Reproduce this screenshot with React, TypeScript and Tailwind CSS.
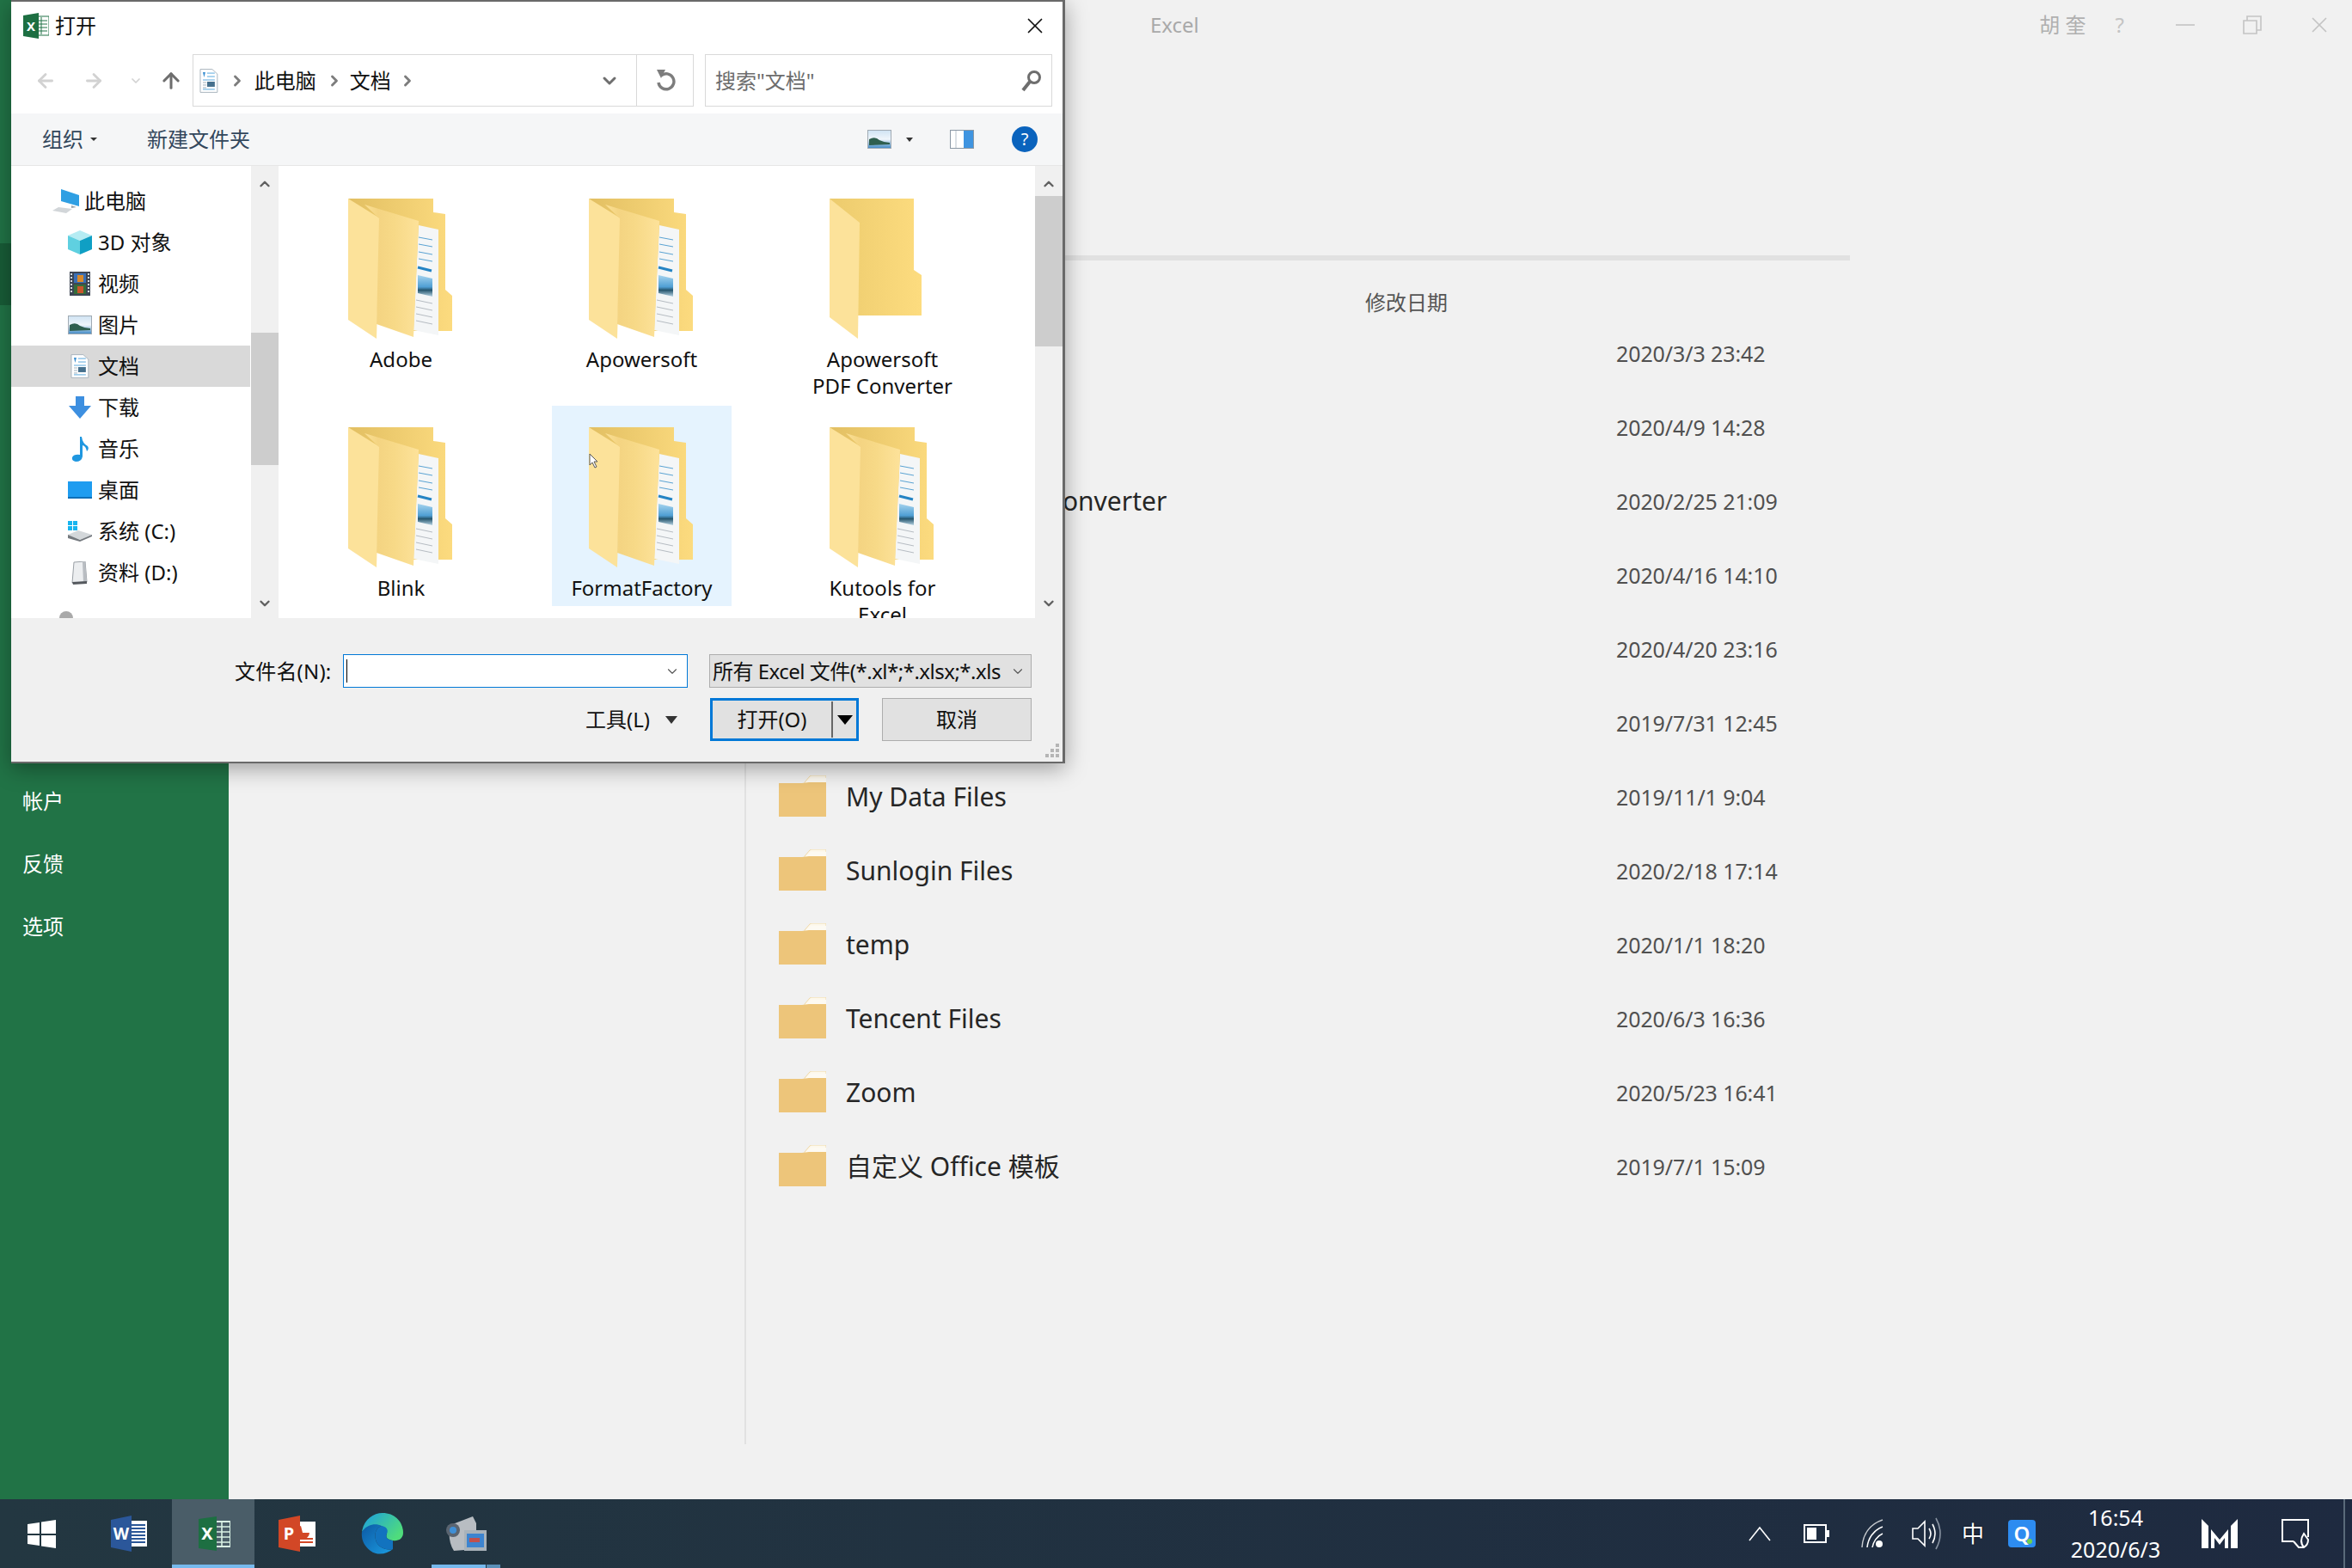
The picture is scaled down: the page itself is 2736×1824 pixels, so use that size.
import { ArrowLeft, ArrowRight, ArrowUp, ChevronDown, ChevronRight, ChevronUp, X } from "lucide-react";
import type { ReactNode } from "react";

// the first rows sit behind the dialog, so only their dates show
const files = [
  ["", "2020/3/3 23:42"],
  ["", "2020/4/9 14:28"],
  ["Apowersoft PDF Converter", "2020/2/25 21:09"],
  ["", "2020/4/16 14:10"],
  ["", "2020/4/20 23:16"],
  ["", "2019/7/31 12:45"],
  ["My Data Files", "2019/11/1 9:04"],
  ["Sunlogin Files", "2020/2/18 17:14"],
  ["temp", "2020/1/1 18:20"],
  ["Tencent Files", "2020/6/3 16:36"],
  ["Zoom", "2020/5/23 16:41"],
  ["自定义 Office 模板", "2019/7/1 15:09"],
];

function ListFolder() {
  return (
    <svg width="55" height="48" viewBox="0 0 55 48" className="shrink-0">
      <path d="M30 8 L36 1 Q37 0 39 0 L55 0 L55 12 L30 12 Z" fill="#fdf8ec" stroke="#efd9a8" strokeWidth="1" />
      <path d="M0 9 L30 9 L37 3 L55 3 L55 48 L0 48 Z" fill="#fdfaf2" />
      <path d="M0 9 L27 9 L35 8 L55 8 L55 48 L0 48 Z" fill="#edc57a" />
    </svg>
  );
}

function BigFolder({ empty }: { empty?: boolean }) {
  if (empty) {
    return (
      <svg width="123" height="163" viewBox="0 0 123 163" className="shrink-0">
        <defs>
          <linearGradient id="emptyBack" x1="0" x2="1" y1="0" y2="0">
            <stop offset="0" stopColor="#eccb6d" />
            <stop offset="1" stopColor="#fddc7f" />
          </linearGradient>
        </defs>
        <path d="M0 0 L98 0 L98 83 L107 89 L107 136 L30 136 Z" fill="url(#emptyBack)" />
        <path d="M0 0 L35 28 L33 163 L0 138 Z" fill="#fce29a" />
      </svg>
    );
  }
  return (
    <svg width="123" height="163" viewBox="0 0 123 163" className="shrink-0">
      <defs>
        <linearGradient id="flapTop" x1="0" x2="1" y1="0" y2="0">
          <stop offset="0" stopColor="#e2bf62" />
          <stop offset="1" stopColor="#fcdb7f" />
        </linearGradient>
        <linearGradient id="leaf" x1="0" x2="1" y1="0" y2="0">
          <stop offset="0" stopColor="#fbe094" />
          <stop offset="0.25" stopColor="#f4d482" />
          <stop offset="0.55" stopColor="#f7d987" />
          <stop offset="1" stopColor="#fde29a" />
        </linearGradient>
        <linearGradient id="sky" x1="0" x2="0" y1="0" y2="1">
          <stop offset="0" stopColor="#a5d3ee" />
          <stop offset="0.55" stopColor="#4f9fd4" />
          <stop offset="0.7" stopColor="#27576f" />
          <stop offset="1" stopColor="#b7d4e4" />
        </linearGradient>
      </defs>
      <path d="M0 0 L99 0 L99 16 L113 18 L113 106 L121 113 L121 154 L60 154 Z" fill="url(#flapTop)" />
      <path d="M82 31 L105 36 L105 159 L76 153 Z" fill="#f4f6f7" />
      <g stroke="#5aa3d3" strokeWidth="1">
        <path d="M82 45 L98 48" />
        <path d="M82 53 L98 56" />
        <path d="M82 62 L98 65" />
        <path d="M82 70 L98 73" />
      </g>
      <path d="M81 80 L97 84" stroke="#2584c4" strokeWidth="3" />
      <path d="M81 89 L98 93 L98 114 L81 110 Z" fill="url(#sky)" />
      <g stroke="#b6bcc2" strokeWidth="1">
        <path d="M79 118 L98 122" />
        <path d="M79 126 L98 130" />
        <path d="M79 134 L98 138" />
        <path d="M79 142 L98 146" />
      </g>
      <path d="M0 0 L37 23 L33 163 L0 141 Z" fill="#fce29a" />
      <path d="M19 7 L82 26 L76 161 L33 146 L36 23 Z" fill="url(#leaf)" />
    </svg>
  );
}

function Tile({ label, empty, selected }: { label: ReactNode; empty?: boolean; selected?: boolean }) {
  return (
    <div className={`relative flex h-[233px] w-[209px] flex-col items-center pt-[25px] ${selected ? "bg-[#e5f3fe]" : ""}`}>
      <BigFolder empty={empty} />
      <div className="mt-[8px] w-[209px] shrink-0 text-center text-[24px] leading-[31px] text-[#111]">{label}</div>
      {selected && (
        <svg width="12" height="18" viewBox="0 0 12 18" className="absolute left-[43px] top-[55px]">
          <path d="M1 1 L1 14 L4 11 L7 17 L9 16 L6 10 L10 10 Z" fill="#fff" stroke="#555" strokeWidth="1" />
        </svg>
      )}
    </div>
  );
}

function DocIcon({ size = 28 }: { size?: number }) {
  return (
    <svg width={size * 0.78} height={size} viewBox="0 0 22 28">
      <path d="M1 0.5 L15 0.5 L21 6 L21 27.5 L1 27.5 Z" fill="#fff" stroke="#a9b4bd" />
      <path d="M4 4 L7 4 L5.5 10 Z" fill="#3b8fd1" />
      <path d="M9 5 H18 M9 9 H18 M4 13 H18 M4 24 H18" stroke="#5aa8de" strokeWidth="1" />
      <rect x="9" y="15" width="9" height="6" fill="#46708d" />
      <path d="M4 16 H8 M4 19 H8 M4 22 H8" stroke="#9fb0bc" />
    </svg>
  );
}

function PictureIcon({ w = 28, h = 22 }: { w?: number; h?: number }) {
  return (
    <svg width={w} height={h} viewBox="0 0 28 22">
      <defs>
        <linearGradient id="pic" x1="0" x2="0" y1="0" y2="1">
          <stop offset="0" stopColor="#cfe3f3" />
          <stop offset="0.5" stopColor="#f0f6fb" />
          <stop offset="1" stopColor="#3d87c4" />
        </linearGradient>
      </defs>
      <rect x="0.5" y="0.5" width="27" height="21" fill="url(#pic)" stroke="#a0aab3" />
      <path d="M2 11 Q9 7 14 12 Q20 15 26 15 L26 17 L2 18 Z" fill="#2f5f4f" />
    </svg>
  );
}

function TreeIcon({ kind }: { kind: string }) {
  switch (kind) {
    case "pc":
      return (
        <svg width="31" height="28" viewBox="0 0 31 28">
          <path d="M10 0 L31 7 L31 20 L10 14 Z" fill="#2f9fe3" />
          <path d="M22 19 L28 21 L22 22 Z" fill="#9aa3aa" />
          <path d="M7 21 L23 23 L16 28 L0 25 Z" fill="#d2d6d9" />
        </svg>
      );
    case "cube":
      return (
        <svg width="28" height="28" viewBox="0 0 28 28">
          <path d="M14 0 L28 6 L14 12 L0 6 Z" fill="#b5ecf3" />
          <path d="M0 6 L14 12 L14 28 L0 22 Z" fill="#5fd0e0" />
          <path d="M14 12 L28 6 L28 22 L14 28 Z" fill="#0f9fc4" />
        </svg>
      );
    case "film":
      return (
        <svg width="24" height="28" viewBox="0 0 24 28">
          <rect width="24" height="28" fill="#3d4654" />
          <path d="M2 2 V26 M22 2 V26" stroke="#d6dbe0" strokeWidth="2" strokeDasharray="2 2" />
          <rect x="5" y="2" width="14" height="11" fill="#3a6fb5" />
          <rect x="9" y="4" width="7" height="8" fill="#d98a2b" />
          <rect x="5" y="15" width="14" height="11" fill="#356d3a" />
          <rect x="9" y="17" width="7" height="8" fill="#c9552c" />
        </svg>
      );
    case "picture":
      return <PictureIcon />;
    case "doc":
      return <DocIcon />;
    case "down":
      return (
        <svg width="26" height="26" viewBox="0 0 26 26">
          <path d="M8 0 H18 V11 H26 L13 26 L0 11 H8 Z" fill="#3d8fe0" />
        </svg>
      );
    case "music":
      return (
        <svg width="22" height="29" viewBox="0 0 22 29">
          <path d="M11 0 L13 0 Q14 8 20 11 Q22 14 19 17 Q18 11 14 10 L14 23 Q13 29 6 29 Q1 28 2 24 Q4 20 11 21 Z" fill="#1f97e0" />
        </svg>
      );
    case "desk":
      return (
        <svg width="28" height="20" viewBox="0 0 28 20">
          <rect width="28" height="20" fill="#1e9cf0" />
          <rect y="18" width="28" height="2" fill="#0e6fb8" />
        </svg>
      );
    case "c":
      return (
        <svg width="28" height="24" viewBox="0 0 28 24">
          <rect x="0" y="0" width="5" height="5" fill="#18b5ef" />
          <rect x="6" y="0" width="5" height="5" fill="#18b5ef" />
          <rect x="0" y="6" width="5" height="5" fill="#18b5ef" />
          <rect x="6" y="6" width="5" height="5" fill="#18b5ef" />
          <path d="M0 16 L12 11 L28 16 L14 22 Z" fill="#d3d7da" />
          <path d="M0 16 L14 22 L28 16 L28 18 L14 24 L0 20 Z" fill="#74797e" />
        </svg>
      );
    case "d":
      return (
        <svg width="20" height="27" viewBox="0 0 20 27">
          <path d="M3 1 L16 0 L18 24 L1 25 Z" fill="#eceef0" stroke="#9aa0a6" />
          <path d="M13 1 L16 0 L18 24 L14 25 Z" fill="#b9bdc2" />
          <path d="M1 24 L18 23 L18 26 L2 27 Z" fill="#55595e" />
        </svg>
      );
    default:
      return <div className="mt-[6px] h-[16px] w-[16px] rounded-full bg-[#a9a9a9]" />;
  }
}

function Tree({ kind, label, selected, root }: { kind: string; label: string; selected?: boolean; root?: boolean }) {
  return (
    <div className={`flex h-[48px] items-center ${root ? "pl-[48px]" : "pl-[66px]"} ${selected ? "bg-[#d9d9d9]" : ""}`}>
      <div className={`flex justify-center ${root ? "w-[31px]" : "w-[28px]"}`}>
        <TreeIcon kind={kind} />
      </div>
      <span className={`${root ? "ml-[6px]" : "ml-[7px]"} text-[24px] text-[#111]`}>{label}</span>
    </div>
  );
}

function ScrollBar({ thumbTop, thumbHeight }: { thumbTop: string; thumbHeight: string }) {
  return (
    <div className="flex h-full w-[32px] shrink-0 flex-col bg-[#f0f0f0]">
      <div className="flex h-[35px] items-center justify-center pt-[6px]">
        <ChevronUp size={18} strokeWidth={3.2} className="text-[#606060]" />
      </div>
      <div className={`${thumbTop} ${thumbHeight} bg-[#cdcdcd]`} />
      <div className="mb-[8px] mt-auto flex h-[18px] items-center justify-center">
        <ChevronDown size={18} strokeWidth={3.2} className="text-[#606060]" />
      </div>
    </div>
  );
}

function Caret({ className }: { className: string }) {
  return <div className={`h-0 w-0 border-x-transparent border-t-[#333] ${className}`} />;
}

function Dialog() {
  return (
    <div className="absolute left-[13px] top-0 flex h-[888px] w-[1226px] flex-col border-y-2 border-r-[3px] border-[#696969] bg-white shadow-[0_6px_24px_rgba(0,0,0,0.35)]">
      <div className="flex h-[61px] shrink-0 items-center pb-[6px] pl-[14px] pr-[17px]">
        <svg width="30" height="30" viewBox="0 0 30 30">
          <rect x="12" y="4" width="18" height="22" fill="#fff" stroke="#217346" />
          <path d="M14 9 H28 M14 13 H28 M14 17 H28 M14 21 H28 M21 5 V25" stroke="#217346" strokeWidth="1" />
          <path d="M0 3 L18 0 L18 30 L0 27 Z" fill="#1d6f42" />
          <text x="9" y="21" textAnchor="middle" fontSize="15" fontWeight="700" fill="#fff">X</text>
        </svg>
        <span className="ml-[7px] text-[24px] text-[#111]">打开</span>
        <X size={30} strokeWidth={1.4} className="ml-auto text-[#111]" />
      </div>

      <div className="flex h-[69px] shrink-0 items-start">
        <div className="flex h-[61px] items-center">
          <ArrowLeft size={26} strokeWidth={2.6} className="ml-[27px] text-[#d2d2d2]" />
          <ArrowRight size={26} strokeWidth={2.6} className="ml-[30px] text-[#d2d2d2]" />
          <ChevronDown size={16} strokeWidth={2.6} className="ml-[28px] text-[#d2d2d2]" />
          <ArrowUp size={28} strokeWidth={2.6} className="ml-[19px] text-[#6e6e6e]" />
        </div>
        <div className="ml-[11px] flex h-[61px] w-[583px] items-center border border-[#d9d9d9] pl-[7px]">
          <DocIcon />
          <ChevronRight size={20} strokeWidth={3.4} className="ml-[12px] text-[#7d7d7d]" />
          <span className="ml-[10px] text-[24px] text-[#111]">此电脑</span>
          <ChevronRight size={20} strokeWidth={3.4} className="ml-[11px] text-[#7d7d7d]" />
          <span className="ml-[8px] text-[24px] text-[#111]">文档</span>
          <ChevronRight size={20} strokeWidth={3.4} className="ml-[9px] text-[#7d7d7d]" />
          <ChevronDown size={24} strokeWidth={3} className="ml-auto mr-[19px] text-[#6e6e6e]" />
          <div className="flex h-full w-[66px] items-center justify-center border-l border-[#d9d9d9]">
            <svg width="24" height="28" viewBox="0 0 24 28">
              <path d="M7 8 A9 9 0 1 1 4 16" fill="none" stroke="#7d7d7d" strokeWidth="3.4" />
              <path d="M2 1 L12 1 L7 11 Z" fill="#7d7d7d" />
            </svg>
          </div>
        </div>
        <div className="ml-[13px] flex h-[61px] w-[404px] items-center border border-[#d9d9d9] pl-[11px] pr-[11px]">
          <span className="text-[24px] text-[#6d6d6d]">搜索"文档"</span>
          <svg width="24" height="26" viewBox="0 0 24 26" className="ml-auto">
            <circle cx="15" cy="9" r="6.5" fill="none" stroke="#6e6e6e" strokeWidth="3" />
            <path d="M10 14 L2 24" stroke="#6e6e6e" strokeWidth="4" />
          </svg>
        </div>
      </div>

      <div className="flex h-[61px] shrink-0 items-center border-b border-[#e6e6e6] bg-[#f5f6f7] pl-[36px] text-[24px] text-[#33475c]">
        <span>组织</span>
        <Caret className="ml-[8px] border-x-[4px] border-t-[4px]" />
        <span className="ml-[58px]">新建文件夹</span>
        <div className="ml-auto flex items-center pr-[29px]">
          <PictureIcon />
          <Caret className="ml-[17px] border-x-[4px] border-t-[5px]" />
          <svg width="28" height="22" viewBox="0 0 28 22" className="ml-[43px]">
            <rect x="0.5" y="0.5" width="27" height="21" fill="#fff" stroke="#8b98a5" />
            <rect x="16" y="1" width="11" height="20" fill="#3f94e0" />
            <path d="M7 1 V21" stroke="#b9c2cb" />
          </svg>
          <div className="ml-[44px] flex h-[30px] w-[30px] items-center justify-center rounded-full bg-[#0a63bd] text-[20px] text-white">?</div>
        </div>
      </div>

      <div className="flex h-[526px] shrink-0">
        <div className="h-full w-[278px] shrink-0 overflow-hidden pt-[17px]">
          <Tree kind="pc" label="此电脑" root />
          <Tree kind="cube" label="3D 对象" />
          <Tree kind="film" label="视频" />
          <Tree kind="picture" label="图片" />
          <Tree kind="doc" label="文档" selected />
          <Tree kind="down" label="下载" />
          <Tree kind="music" label="音乐" />
          <Tree kind="desk" label="桌面" />
          <Tree kind="c" label="系统 (C:)" />
          <Tree kind="d" label="资料 (D:)" />
          <div className="mt-[21px] pl-[56px]">
            <TreeIcon kind="net" />
          </div>
        </div>
        <div className="ml-px h-full">
          <ScrollBar thumbTop="mt-[159px]" thumbHeight="h-[154px]" />
        </div>
        <div className="ml-[4px] h-full w-[876px] shrink-0 overflow-hidden pl-[34px] pt-[13px]">
          <div className="grid grid-cols-[209px_209px_209px] gap-x-[71px] gap-y-[33px]">
            <Tile label="Adobe" />
            <Tile label="Apowersoft" />
            <Tile label={<>Apowersoft<br />PDF Converter</>} empty />
            <Tile label="Blink" />
            <Tile label="FormatFactory" selected />
            <Tile label={<>Kutools for<br />Excel</>} />
          </div>
        </div>
        <ScrollBar thumbTop="mt-0" thumbHeight="h-[175px]" />
      </div>

      <div className="relative flex-1 bg-[#f0f0f0] text-[24px] text-[#111]">
        <div className="mt-[42px] flex h-[39px] items-center pl-[260px]">
          <span className="w-[126px] tracking-[0.2px]">文件名(N):</span>
          <div className="flex h-[39px] w-[401px] items-center justify-between border border-[#0078d7] bg-white pl-[3px] pr-[8px]">
            <div className="h-[27px] w-px bg-black" />
            <ChevronDown size={18} strokeWidth={1.5} className="text-[#555]" />
          </div>
          <div className="ml-[25px] flex h-[39px] w-[375px] items-center justify-between border border-[#adadad] bg-[#e1e1e1] pl-[3px] pr-[6px]">
            <span className="whitespace-nowrap text-[24px] tracking-[-0.5px]">所有 Excel 文件(*.xl*;*.xlsx;*.xls</span>
            <ChevronDown size={18} strokeWidth={1.5} className="shrink-0 text-[#555]" />
          </div>
        </div>
        <div className="mt-[12px] flex h-[50px] items-center pl-[668px]">
          <span className="w-[93px]">工具(L)</span>
          <Caret className="border-x-[7px] border-t-[9px]" />
          <div className="ml-[38px] flex h-[50px] w-[173px] items-center border-[3px] border-[#0078d7] bg-[#e1e1e1]">
            <span className="w-[138px] text-center">打开(O)</span>
            <div className="h-[42px] w-[2px] bg-[#666]" />
            <Caret className="ml-[5px] border-x-[9px] border-t-[11px] border-t-black" />
          </div>
          <div className="ml-[27px] flex h-[50px] w-[174px] items-center justify-center border border-[#adadad] bg-[#e1e1e1]">取消</div>
        </div>
        <svg width="18" height="18" viewBox="0 0 18 18" className="absolute bottom-[3px] right-[3px]">
          <g fill="#b5b5b5">
            <rect x="13" y="0" width="4" height="4" />
            <rect x="7" y="6" width="4" height="4" />
            <rect x="13" y="6" width="4" height="4" />
            <rect x="1" y="12" width="4" height="4" />
            <rect x="7" y="12" width="4" height="4" />
            <rect x="13" y="12" width="4" height="4" />
          </g>
        </svg>
      </div>
    </div>
  );
}

function Taskbar() {
  return (
    <div className="flex h-[80px] shrink-0 items-center bg-linear-to-r from-[#233741] to-[#1e2a40] text-white">
      <svg width="33" height="33" viewBox="0 0 33 33" className="ml-[32px]">
        <path d="M0 5 L14 3 L14 16 L0 16 Z M16 2.5 L33 0 L33 16 L16 16 Z M0 18 L14 18 L14 30 L0 28 Z M16 18 L33 18 L33 33 L16 30.5 Z" fill="#fff" />
      </svg>
      <svg width="42" height="42" viewBox="0 0 42 42" className="ml-[64px]">
        <rect x="18" y="6" width="24" height="30" fill="#fff" />
        <path d="M20 11 H40 M20 15 H40 M20 19 H40 M20 23 H40 M20 27 H40 M20 31 H40" stroke="#2b5797" strokeWidth="2" />
        <path d="M0 5 L24 0 L24 42 L0 37 Z" fill="#2b579a" />
        <text x="12" y="28" textAnchor="middle" fontSize="19" fontWeight="700" fill="#fff">W</text>
      </svg>
      <div className="relative ml-[29px] flex h-[80px] w-[96px] items-center justify-center bg-[#4a5d68]">
        <svg width="40" height="40" viewBox="0 0 40 40">
          <rect x="20" y="6" width="20" height="29" fill="none" stroke="#d9f2e4" strokeWidth="2" />
          <path d="M21 12 H39 M21 18 H39 M21 24 H39 M21 30 H39 M30 6 V35" stroke="#d9f2e4" strokeWidth="1.6" />
          <path d="M3 3 L24 0 L24 40 L3 37 Z" fill="#1d6f42" />
          <text x="13" y="27" textAnchor="middle" fontSize="20" fontWeight="700" fill="#fff">X</text>
        </svg>
        <div className="absolute bottom-0 left-0 h-[4px] w-full bg-[#76b9ed]" />
      </div>
      <svg width="43" height="42" viewBox="0 0 43 42" className="ml-[28px]">
        <rect x="20" y="7" width="23" height="29" fill="#fff" />
        <path d="M26 12 A8 8 0 1 0 36 20 L28 20 Z" fill="#d24726" />
        <path d="M24 27 H40 M24 31 H40" stroke="#d24726" strokeWidth="2" />
        <path d="M0 5 L25 0 L25 42 L0 37 Z" fill="#d24726" />
        <text x="12" y="28" textAnchor="middle" fontSize="20" fontWeight="700" fill="#fff">P</text>
      </svg>
      <svg width="49" height="49" viewBox="0 0 49 49" className="ml-[53px]">
        <defs>
          <linearGradient id="edgeTop" x1="0" x2="1" y1="0" y2="0.6">
            <stop offset="0" stopColor="#1b9de2" />
            <stop offset="1" stopColor="#4fdc7c" />
          </linearGradient>
          <linearGradient id="edgeBody" x1="0" x2="1" y1="0" y2="1">
            <stop offset="0" stopColor="#0c59a4" />
            <stop offset="1" stopColor="#1b9de2" />
          </linearGradient>
        </defs>
        <path d="M1 22 C3 8 14 0 25 0 C40 0 49 11 49 23 C49 30 43 33 37 32 C31 31 28 29 30 24 C31 18 24 13 16 15 C8 17 3 20 1 22 Z" fill="url(#edgeTop)" />
        <path d="M1 22 C6 14 16 11 24 15 C18 17 15 23 17 31 C19 40 29 44 37 42 C30 48 19 50 11 44 C3 38 0 30 1 22 Z" fill="url(#edgeBody)" />
        <path d="M24 15 C30 16 32 20 30 24 C28 29 31 31 37 32 L37 42 C29 44 19 40 17 31 C15 23 18 17 24 15 Z" fill="#1273bf" />
      </svg>
      <div className="relative ml-[33px] flex h-[80px] w-[80px] items-center justify-center">
        <svg width="48" height="44" viewBox="0 0 48 44">
          <path d="M6 12 L32 2 L36 10 L36 40 L10 42 Q2 30 6 12 Z" fill="#b8bdc2" />
          <circle cx="9" cy="18" r="8" fill="#5a6470" />
          <circle cx="9" cy="18" r="4" fill="#3f8fd6" />
          <rect x="22" y="18" width="26" height="24" fill="#a8b2ba" />
          <rect x="25" y="22" width="20" height="16" fill="#3d84cf" />
          <rect x="28" y="27" width="12" height="5" fill="#c0504d" />
        </svg>
        <div className="absolute bottom-0 left-0 flex h-[4px] w-full">
          <div className="w-[63px] bg-[#76b9ed]" />
          <div className="ml-px flex-1 bg-[#5a8fb8]" />
        </div>
      </div>

      <div className="ml-auto flex items-center pr-[8px]">
        <svg width="26" height="20" viewBox="0 0 26 20" className="mr-[38px]">
          <path d="M1 18 L13 3 L25 18" fill="none" stroke="#fff" strokeWidth="1.6" />
        </svg>
        <svg width="30" height="24" viewBox="0 0 30 24" className="mr-[37px]">
          <rect x="1" y="2" width="25" height="20" fill="none" stroke="#fff" strokeWidth="2" />
          <rect x="4" y="5" width="11" height="14" fill="#fff" />
          <rect x="27" y="8" width="3" height="8" fill="#fff" />
        </svg>
        <svg width="26" height="34" viewBox="0 0 26 34" className="mr-[33px]">
          <g fill="none" stroke="#fff" strokeWidth="1.5">
            <path d="M1 33 C2 18 10 6 25 1" strokeOpacity="0.75" />
            <path d="M7 33 C8 23 14 13 25 9" />
            <path d="M13 33 C14 27 18 20 25 17" />
          </g>
          <circle cx="21" cy="29" r="4" fill="#fff" />
        </svg>
        <svg width="34" height="42" viewBox="0 0 34 42" className="mr-[24px]">
          <g fill="none" stroke="#fff" strokeWidth="1.6">
            <path d="M1 15 H7 L15 7 V35 L7 27 H1 Z" />
            <path d="M20 15 Q24 21 20 27" />
            <path d="M24 10 Q30 21 24 32" />
          </g>
          <path d="M28 3 Q38 21 28 39" fill="none" stroke="#8791a0" strokeWidth="1.6" />
        </svg>
        <span className="mr-[28px] text-[26px] leading-none text-white [text-shadow:0_0_2px_#000]">中</span>
        <div className="relative mr-[41px] flex h-[32px] w-[32px] items-center justify-center rounded-[4px] bg-[#2d8cf0] text-[24px] font-semibold">
          Q
          <div className="absolute bottom-[4px] right-[4px] h-[6px] w-[6px] rounded-full bg-[#6fd14f]" />
        </div>
        <div className="flex w-[104px] flex-col items-center text-[25px] leading-[37px]">
          <span>16:54</span>
          <span>2020/6/3</span>
        </div>
        <svg width="42" height="34" viewBox="0 0 42 34" className="ml-[48px]">
          <path d="M0 0 L8 8 L8 34 L0 34 Z M34 8 L42 0 L42 34 L34 34 Z M11 12 L21 24 L31 12 L31 34 L27 34 L27 22 L21 30 L15 22 L15 34 L11 34 Z" fill="#fff" />
        </svg>
        <svg width="32" height="34" viewBox="0 0 32 34" className="ml-[51px]">
          <path d="M14 26 H1 V1 H31 V21" fill="none" stroke="#fff" strokeWidth="2" />
          <path d="M14 26 L20 33 H26 Q31 30 31 24 L26 17 Q20 26 26 33" fill="none" stroke="#fff" strokeWidth="2" />
        </svg>
        <div className="ml-[40px] h-[80px] w-[2px] bg-[#5a6a7a]" />
      </div>
    </div>
  );
}

export default function App() {
  return (
    <div className="relative flex h-[1824px] w-[2736px] flex-col overflow-hidden bg-[#f1f1f1] font-['Noto_Sans','Noto_Sans_CJK_SC',sans-serif]">
      <div className="flex h-[1744px] shrink-0">
        <aside className="flex w-[266px] shrink-0 flex-col bg-[#217346] pt-[283px] text-[24px] text-white">
          <div className="h-[72px] bg-[#185c37]" />
          <div className="mt-[540px] flex h-[73px] items-center pl-[26px]">帐户</div>
          <div className="flex h-[73px] items-center pl-[26px]">反馈</div>
          <div className="flex h-[73px] items-center pl-[26px]">选项</div>
        </aside>
        <main className="flex min-w-0 flex-1 flex-col">
          <div className="flex h-[58px] shrink-0 items-center text-[#a9a9a9]">
            <span className="ml-[1072px] text-[24px]">Excel</span>
            <span className="ml-auto text-[24px] text-[#b0b0b0]">胡 奎</span>
            <span className="ml-[34px] text-[24px] text-[#c4c4c4]">?</span>
            <div className="ml-[60px] h-[2px] w-[22px] bg-[#cccccc]" />
            <svg width="22" height="22" viewBox="0 0 22 22" className="ml-[56px]">
              <path d="M1 6 H16 V21 H1 Z M5 6 V1 H21 V17 H16" fill="none" stroke="#c4c4c4" strokeWidth="1.6" />
            </svg>
            <X size={30} strokeWidth={1.4} className="ml-[52px] mr-[23px] text-[#c4c4c4]" />
          </div>
          <div className="flex min-h-0 flex-1">
            <div className="h-[1622px] w-[602px] shrink-0 border-r-2 border-[#e1e1e1]" />
            <section className="flex-1">
              <div className="mt-[239px] h-[6px] w-[1284px] bg-[#e1e1e1]" />
              <div className="mt-[34px] pl-[720px] text-[24px] leading-[30px] text-[#555]">修改日期</div>
              <div>
                {files.map(([name, date]) => (
                  <div key={date} className="flex h-[86px] items-center pl-[38px]">
                    <ListFolder />
                    <span className="ml-[23px] w-[896px] shrink-0 whitespace-nowrap text-[30px] text-[#262626]">{name}</span>
                    <span className="mt-[3px] text-[25px] tracking-[-0.1px] text-[#505050]">{date}</span>
                  </div>
                ))}
              </div>
            </section>
          </div>
        </main>
      </div>
      <Taskbar />
      <Dialog />
    </div>
  );
}
